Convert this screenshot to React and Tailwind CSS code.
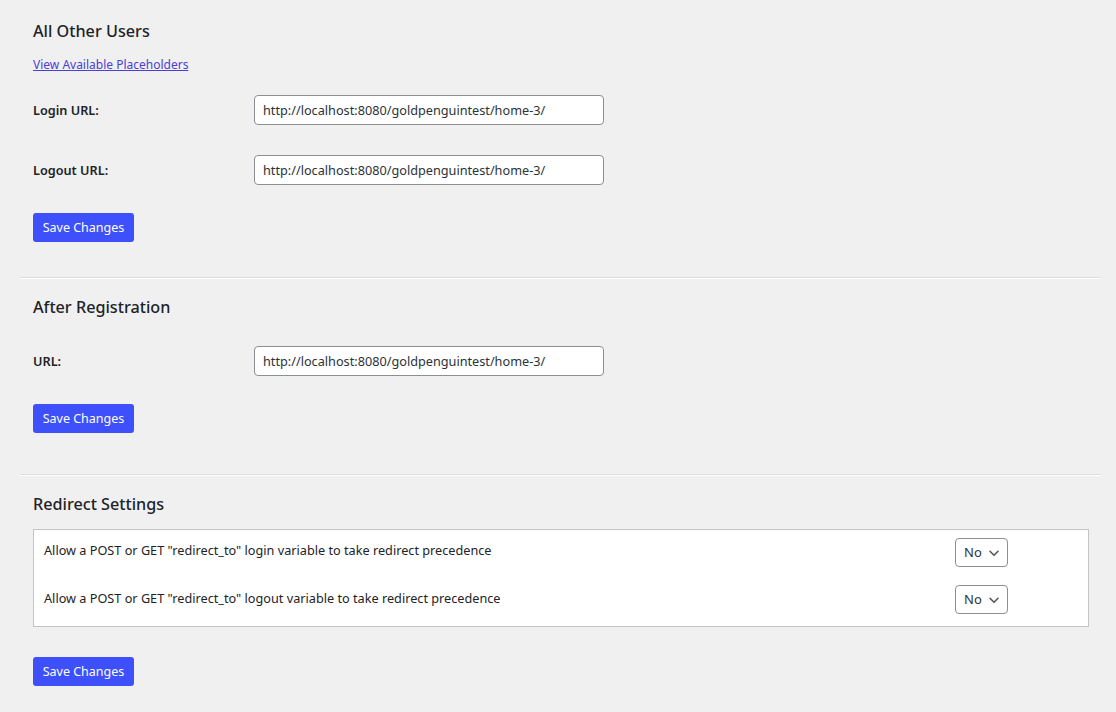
import { useState } from "react";

const URL_VALUE = "http://localhost:8080/goldpenguintest/home-3/";

function SaveButton() {
  return (
    <button className="h-[29px] w-[101px] rounded-[3px] bg-[#3d50fb] pt-[2px] text-[12.5px] text-white">
      Save Changes
    </button>
  );
}

function UrlRow({ label, className = "" }) {
  const [value, setValue] = useState(URL_VALUE);
  return (
    <div className={`flex items-center ${className}`}>
      <label className="w-[221px] pt-[1px] text-[12.7px] font-semibold text-[#1d2327]">{label}</label>
      <input
        value={value}
        onChange={(e) => setValue(e.target.value)}
        className="h-[30px] w-[350px] rounded-[4px] border border-[#8c8f94] bg-white px-[8px] text-[12.7px] text-[#2c3338] outline-none"
      />
    </div>
  );
}

function Separator({ className = "" }) {
  return <div className={`mr-[15px] border-t border-b border-t-[#dcdcde] border-b-white ${className}`} />;
}

function NoSelect() {
  return (
    <div className="mr-[80px] flex h-[29px] w-[53px] items-center justify-between rounded-[4px] border border-[#8c8f94] bg-white pl-[8px] pr-[7px] text-[13px] text-[#2c3338]">
      <span>No</span>
      <svg width="12" height="12" viewBox="0 0 12 12" fill="none">
        <path d="M2 4.3 6 8.3l4-4" stroke="#50575e" strokeWidth="1.6" strokeLinecap="round" strokeLinejoin="round" />
      </svg>
    </div>
  );
}

function Heading({ children, className = "" }) {
  return (
    <h2 className={`px-[13px] text-[16.2px] leading-[22px] font-medium text-[#1d2327] ${className}`}>
      {children}
    </h2>
  );
}

export default function App() {
  return (
    <div
      className="min-h-[712px] bg-[#f0f0f1] pl-[20px] pt-[20px] pb-[20px]"
      style={{ fontFamily: '"Noto Sans", "Open Sans", sans-serif' }}
    >
      {/* All Other Users */}
      <Heading>All Other Users</Heading>
      <div className="px-[13px]">
        <a href="#" className="mt-[14px] block text-[12px] leading-[18px] text-[#4b3fd6] underline">
          View Available Placeholders
        </a>
        <UrlRow label="Login URL:" className="mt-[21px]" />
        <UrlRow label="Logout URL:" className="mt-[30px]" />
        <div className="mt-[28px]">
          <SaveButton />
        </div>
      </div>

      <Separator className="mt-[35px]" />

      {/* After Registration */}
      <Heading className="mt-[17px]">After Registration</Heading>
      <div className="px-[13px]">
        <UrlRow label="URL:" className="mt-[28px]" />
        <div className="mt-[28px]">
          <SaveButton />
        </div>
      </div>

      <Separator className="mt-[41px]" />

      {/* Redirect Settings */}
      <Heading className="mt-[17px]">Redirect Settings</Heading>
      <div className="px-[13px]">
        <div className="mt-[14px] mr-[14px] border border-[#c3c4c7] bg-white pb-[3px]">
          <div className="flex items-start justify-between pl-[10px] pt-[8px] pb-[9px]">
            <span className="mt-[3px] text-[12.7px] leading-[18px] text-[#1d2327]">
              Allow a POST or GET "redirect_to" login variable to take redirect precedence
            </span>
            <NoSelect />
          </div>
          <div className="flex items-start justify-between pl-[10px] pt-[9px] pb-[9px]">
            <span className="mt-[4px] text-[12.7px] leading-[18px] text-[#1d2327]">
              Allow a POST or GET "redirect_to" logout variable to take redirect precedence
            </span>
            <NoSelect />
          </div>
        </div>
        <div className="mt-[30px]">
          <SaveButton />
        </div>
      </div>
    </div>
  );
}
